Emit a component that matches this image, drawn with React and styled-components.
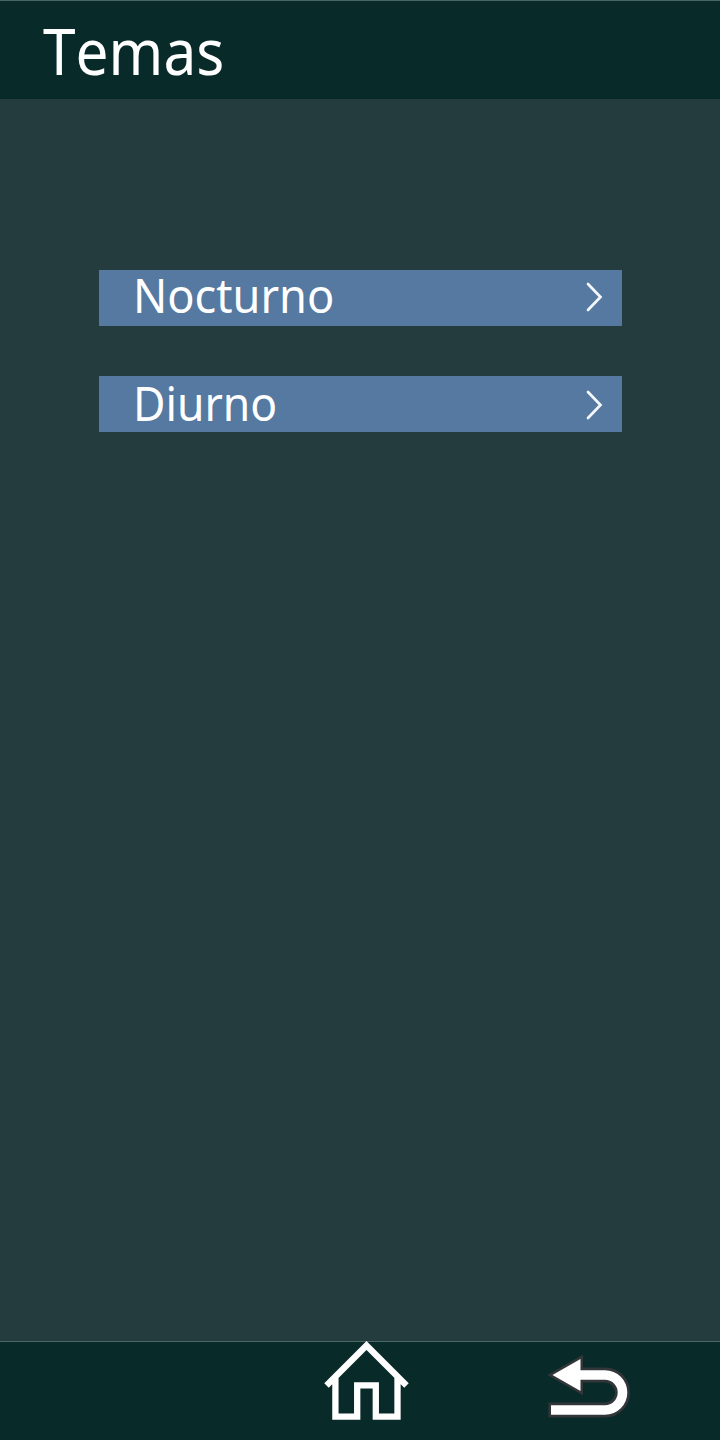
import React from 'react';
import styled, { createGlobalStyle } from 'styled-components';

const GlobalStyle = createGlobalStyle`
  * { box-sizing: border-box; }
  body { margin: 0; background: #243c3d; }
`;
const Screen = styled.div`
  display: flex;
  flex-direction: column;
  width: 720px;
  height: 1440px;
  overflow: hidden;
  background: #243c3d;
  color: #fff;
  font-family: 'Noto Sans', 'Open Sans', sans-serif;
`;
const Header = styled.header`
  height: 99px;
  flex: none;
  padding: 6px 0 0 43px;
  background: #082b2a;
  border-top: 1px solid #486663;
`;
const Title = styled.h1`
  margin: 0;
  font-size: 63px;
  line-height: 88px;
  font-weight: 400;
  font-kerning: none;
  transform: scaleX(0.93);
  transform-origin: left;
`;
const Options = styled.main`
  flex: 1;
  display: flex;
  flex-direction: column;
  gap: 50px;
  padding: 171px 98px 0 99px;
`;
const Option = styled.button`
  display: flex;
  align-items: center;
  justify-content: space-between;
  height: 56px;
  padding: ${({ $low }) => ($low ? '2px 19px 0 34px' : '0 19px 2px 34px')};
  border: 0;
  background: #5579a1;
  color: inherit;
  font: 400 47.5px/50px 'Noto Sans', 'Open Sans', sans-serif;
`;
const Label = styled.span`
  padding-bottom: 4px;
  transform: scaleX(${({ $stretch }) => $stretch});
  transform-origin: left;
`;
const Footer = styled.footer`
  display: flex;
  flex: none;
  height: 99px;
  padding-left: 324px;
  gap: 138px;
  background: #082b2a;
  border-top: 1px solid #4c6865;
`;
const Icon = styled.svg`
  display: block;
  flex: none;
  overflow: visible;
`;

const Chevron = () => (
  <Icon width="18" height="30" viewBox="0 0 18 30" fill="none" stroke="#f4f8fc" strokeWidth="2.7" strokeLinecap="round">
    <path d="M3 2L15.500 15L3 28" />
  </Icon>
);

const HomeIcon = () => (
  <Icon width="86" height="98" viewBox="324 1342 86 98" fill="none" stroke="#fff" strokeWidth="6.300">
    <path d="M326.500 1385.500L366.500 1345.500L406.500 1385.500M335.400 1376V1416.700H357.200V1385.400H375.800V1416.700H397.500V1376" />
  </Icon>
);

const BackIcon = () => (
  <Icon width="86" height="98" viewBox="548 1342 86 98">
    <g fill="none" stroke="#333638">
      <path d="M578 1375H605A17.500 17.500 0 0 1 605 1410H548.500" strokeWidth="15" />
      <path d="M552.500 1375L580.500 1359V1391Z" strokeWidth="5" />
    </g>
    <path d="M578 1375H605A17.500 17.500 0 0 1 605 1410H551" fill="none" stroke="#fff" strokeWidth="9.600" />
    <path d="M552.500 1375L580.500 1359V1391Z" fill="#fff" />
  </Icon>
);

const themes = [
  { name: 'Nocturno', stretch: 0.95, low: false },
  { name: 'Diurno', stretch: 0.937, low: true },
];

export default function App() {
  return (
    <>
      <GlobalStyle />
      <Screen>
        <Header><Title>Temas</Title></Header>
        <Options>
          {themes.map(({ name, stretch, low }) => (
            <Option key={name} $low={low}>
              <Label $stretch={stretch}>{name}</Label>
              <Chevron />
            </Option>
          ))}
        </Options>
        <Footer>
          <HomeIcon />
          <BackIcon />
        </Footer>
      </Screen>
    </>
  );
}
